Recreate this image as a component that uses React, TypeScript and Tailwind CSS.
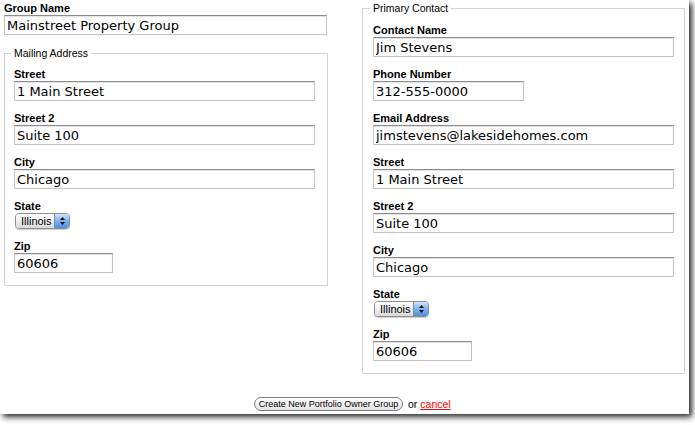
import React from 'react'

const inputCls = "block h-[20px] border border-[#c4c4c4] border-t-[#8c8c8c] bg-white pl-[2px] font-['DejaVu_Sans',sans-serif] text-[13px] leading-[18px] text-black shadow-[inset_0_1px_1px_rgba(0,0,0,0.12)] outline-none"
const labelCls = "block h-[13px] text-[11px] font-bold leading-[13px] text-black"

function Field({ label, value, w = 'w-[301px]' }: { label: string; value: string; w?: string }) {
  return (
    <div className="mb-[11px] last:mb-0">
      <label className={labelCls}>{label}</label>
      <input readOnly value={value} className={`${inputCls} ${w}`} />
    </div>
  )
}

function StateSelect({ value }: { value: string }) {
  return (
    <div className="mb-[11px]">
      <label className={labelCls}>State</label>
      <div className="ml-[1px] flex h-[16px] w-[55px] overflow-hidden rounded-[4px] border border-[#8f8f8f] shadow-[0_1px_1px_rgba(0,0,0,0.2)]">
        <div className="flex flex-1 items-center bg-gradient-to-b from-white via-[#f1f1f1] to-[#d8d8d8] pl-[5px] text-[11px] leading-[14px] text-black">{value}</div>
        <div className="flex w-[15px] flex-col items-center justify-center gap-[2px] border-l border-[#6c8fbf] bg-gradient-to-b from-[#cfe3fb] via-[#7fb1ee] to-[#4a8fe0]">
          <svg width="5" height="3" viewBox="0 0 5 3"><path d="M2.5 0L5 3H0z" fill="#111" /></svg>
          <svg width="5" height="3" viewBox="0 0 5 3"><path d="M0 0h5L2.5 3z" fill="#111" /></svg>
        </div>
      </div>
    </div>
  )
}

function Box({ legend, pad, children }: { legend: string; pad: string; children: React.ReactNode }) {
  return (
    <fieldset className={`border border-[#d3d3d3] pr-[10px] pb-[12px] ${pad}`}>
      <legend className="-ml-[3px] px-[3px] text-[10.5px] leading-[13px] text-black">{legend}</legend>
      {children}
    </fieldset>
  )
}

export default function App() {
  return (
    <div className="min-h-screen bg-white">
      <div className="h-[414px] w-[689px] bg-white font-['Liberation_Sans',Arial,sans-serif] text-black shadow-[3px_3px_6px_rgba(0,0,0,0.85)]">
        <div className="flex pt-[2px]">
          <div className="ml-[4px] w-[324px]">
            <label className={labelCls}>Group Name</label>
            <input readOnly value="Mainstreet Property Group" className={`${inputCls} w-[323px]`} />
            <div className="mt-[12px]">
              <Box legend="Mailing Address" pad="pl-[9px] pt-[8px]">
                <Field label="Street" value="1 Main Street" />
                <Field label="Street 2" value="Suite 100" />
                <Field label="City" value="Chicago" />
                <StateSelect value="Illinois" />
                <Field label="Zip" value="60606" w="w-[99px]" />
              </Box>
            </div>
          </div>
          <div className="ml-[34px] w-[323px]">
            <Box legend="Primary Contact" pad="pl-[10px] pt-[9px]">
              <Field label="Contact Name" value="Jim Stevens" />
              <Field label="Phone Number" value="312-555-0000" w="w-[151px]" />
              <Field label="Email Address" value="jimstevens@lakesidehomes.com" />
              <Field label="Street" value="1 Main Street" />
              <Field label="Street 2" value="Suite 100" />
              <Field label="City" value="Chicago" />
              <StateSelect value="Illinois" />
              <Field label="Zip" value="60606" w="w-[99px]" />
            </Box>
          </div>
        </div>
        <div className="mt-[23px] flex items-center pl-[254px] text-[10.5px] leading-[14px]">
          <button className="h-[14px] w-[149px] rounded-full border border-[#7a7a7a] bg-gradient-to-b from-white to-[#e4e4e4] text-[9px] leading-[12px] text-black">Create New Portfolio Owner Group</button>
          <span className="ml-[5px]">or</span>
          <a href="#" className="ml-[3px] text-[#ff0000] underline">cancel</a>
        </div>
      </div>
    </div>
  )
}
